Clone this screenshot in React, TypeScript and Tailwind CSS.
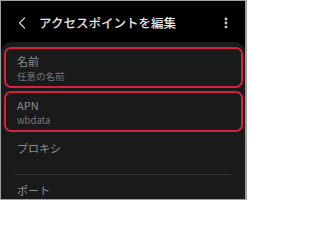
import { ChevronLeft, EllipsisVertical } from "lucide-react";

const font = { fontFamily: '"Noto Sans CJK JP", "Noto Sans", sans-serif' };

function Field({ title, value }: { title: string; value: string }) {
  return (
    <div className="flex h-[41px] flex-col justify-center rounded-[7px] border-2 border-[#d8203c] pl-[11px]">
      <div className="text-[11px] leading-[16px] text-[#8e8e8e]">{title}</div>
      <div className="text-[9.5px] leading-[14px] text-[#777]">{value}</div>
    </div>
  );
}

export default function App() {
  return (
    <div
      className="h-[200px] w-[247px] overflow-hidden border-t border-l border-r-2 border-b border-[#a0a0a0] bg-black"
      style={font}
    >
      <header className="flex h-[41px] items-center pl-[11px] pr-[12px] pt-[3px] text-[#e4e4e4]">
        <ChevronLeft size={20} strokeWidth={1.5} className="text-[#d0d0d0]" />
        <span className="ml-[7px] text-[12.5px] font-medium leading-[16px]">
          アクセスポイントを編集
        </span>
        <EllipsisVertical size={14} strokeWidth={3} className="ml-auto text-[#d0d0d0]" />
      </header>
      <main className="h-full rounded-t-[10px] bg-[#191a1a] px-[2px] pt-[5px]">
        <div className="flex flex-col gap-[3px] pl-[1px]">
          <Field title="名前" value="任意の名前" />
          <Field title="APN" value="wbdata" />
        </div>
        <div className="flex h-[31px] items-center pl-[14px] pt-[1px] text-[11px] text-[#8e8e8e]">
          プロキシ
        </div>
        <div className="mx-[12px] mt-[11px] border-t border-[#333]" />
        <div className="pl-[14px] pt-[8px] text-[11px] leading-[15px] text-[#8e8e8e]">
          ポート
        </div>
      </main>
    </div>
  );
}
